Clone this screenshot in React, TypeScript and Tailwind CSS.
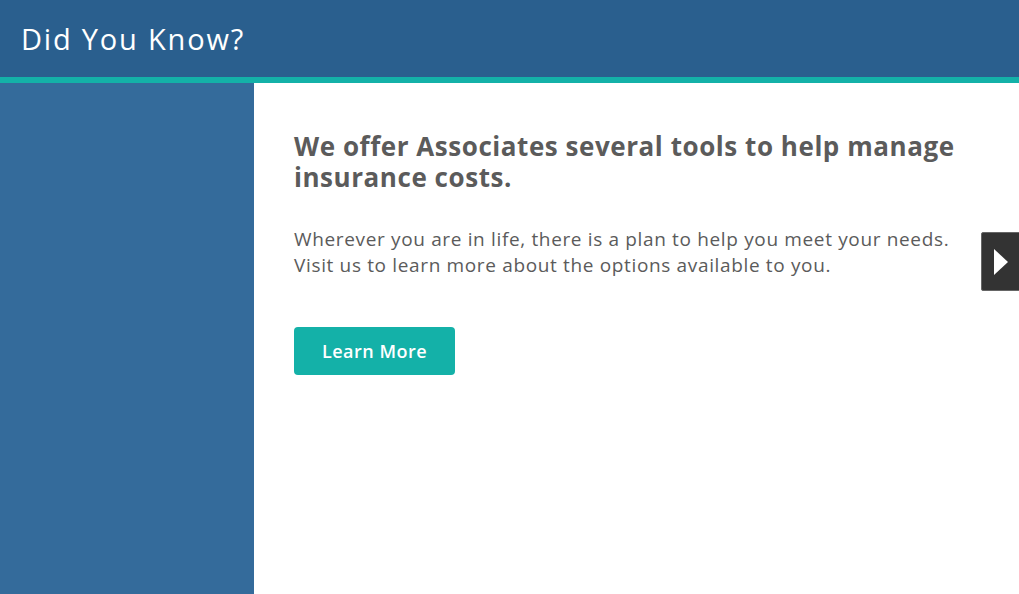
export default function App() {
  return (
    <div className="w-[1019px] h-[594px] flex flex-col overflow-hidden bg-white" style={{ fontFamily: "'Open Sans', sans-serif" }}>
      <div className="h-[77px] bg-[#2a5f8e] flex items-center pl-[21px] shrink-0">
        <h1 className="text-white text-[29px] font-medium leading-none tracking-[1.8px]">Did You Know?</h1>
      </div>
      <div className="h-[6px] bg-[#14b1a8] shrink-0"></div>
      <div className="flex flex-1">
        <div className="w-[254px] bg-[#346b9b] shrink-0"></div>
        <div className="flex-1 relative pl-[40px] pt-[48px]">
          <h2 className="text-[#5b5b5b] text-[26px] font-bold leading-[31px] tracking-[0.55px] w-[690px]">
            We offer Associates several tools to help manage insurance costs.
          </h2>
          <p className="text-[#5b5b5b] text-[19px] leading-[26px] tracking-[0.65px] mt-[33px] w-[700px]">
            Wherever you are in life, there is a plan to help you meet your needs.
            <br />
            Visit us to learn more about the options available to you.
          </p>
          <button className="mt-[49px] w-[161px] h-[48px] rounded-[4px] bg-[#14b1a8] text-white text-[18px] font-semibold tracking-[0.5px]">
            Learn More
          </button>
          <div className="absolute right-[-2px] top-[149px] w-[40px] h-[59px] bg-[#333333] border border-[#666] rounded-[2px] flex items-center justify-center">
            <svg width="14" height="26" viewBox="0 0 14 26"><path d="M0 0 L14 13 L0 26 Z" fill="white" /></svg>
          </div>
        </div>
      </div>
    </div>
  );
}
